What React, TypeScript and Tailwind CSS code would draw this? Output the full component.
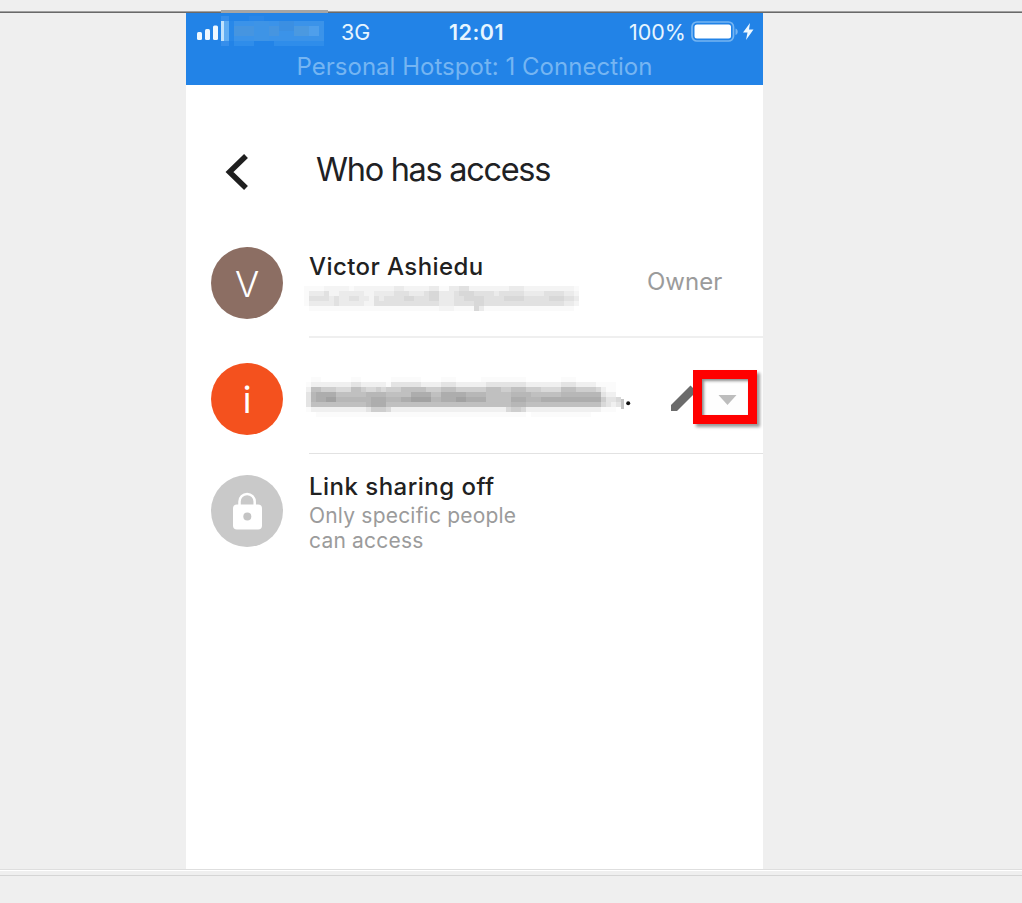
import type { ReactNode } from "react";

const EMAIL_LEVELS = ["", "#fafafa", "#f4f4f4", "#ebebeb", "#e1e1e1", "#d8d8d8"];
const NAME_LEVELS = [
  "",
  "#fbfbfb",
  "#f0f0f0",
  "#e4e4e4",
  "#d9d9d9",
  "#cecece",
  "#c0c0c0",
  "#b7b7b7",
  "#adadad",
  "#a2a2a2",
];

// Each digit is the shade of one mosaic cell
const EMAIL_ROWS = [
  "1111222221222222223322222331133442222222233322222222221",
  "1333422333332233334443334553334555444434444433334444332",
  "1444434334433243444455444553334455554444555544444555443",
  "1333334333332244444444444443334444554444444444444444332",
  "0111111111111111111111111112221111531111111111111111110",
];

const NAME_ROWS = [
  "0011000000110000001111110000111000001111111110000000111000000000",
  "0122222222332222213333332222333222222333333332222222333222211110",
  "0266555444665445455566666555666555555666556665554444666555542110",
  "0378888666666777766666888866888887777666667777666666777777773220",
  "0378899777777788877788999977888998888666668887778888888888885334",
  "0366666666666788866666666666666666666666667776666666666666664323",
  "0122222222222355542222222222222222222222245542222222222222221110",
  "0001111111111111111111111111111111111111111110111111111111000000",
];

interface MosaicProps {
  rows: string[];
  levels: string[];
}

function Mosaic({ rows, levels }: MosaicProps) {
  const width = rows[0].length * 5;
  const height = rows.length * 5;
  return (
    <svg
      width={width}
      height={height}
      viewBox={`0 0 ${width} ${height}`}
      shapeRendering="crispEdges"
      className="block shrink-0"
    >
      {rows.map((row, y) =>
        row.split("").map((cell, x) =>
          cell === "0" ? null : (
            <rect
              key={`${x}-${y}`}
              x={x * 5}
              y={y * 5}
              width={5}
              height={5}
              fill={levels[Number(cell)]}
            />
          )
        )
      )}
    </svg>
  );
}

function SignalIcon() {
  return (
    <svg width="128" height="32" viewBox="0 0 128 32" className="block">
      <g fill="#eef8ff">
        <rect x="1" y="16" width="5" height="8" rx="1.5" />
        <rect x="9" y="13" width="5" height="11" rx="1.5" />
        <rect x="17" y="9.5" width="5" height="14.5" rx="1.5" />
      </g>
      <g shapeRendering="crispEdges">
        <rect x="25" y="0" width="8" height="30" fill="#368eeb" />
        <rect x="38" y="25" width="20" height="5" fill="#2f8dea" />
        <rect x="78" y="25" width="50" height="5" fill="#2f8dea" />
        <rect x="53" y="0" width="15" height="5" fill="#2886e8" />
        <rect x="33" y="5" width="95" height="20" fill="#3b93e9" />
        <rect x="33" y="5" width="5" height="20" fill="#2888e9" />
        <rect x="38" y="10" width="20" height="10" fill="#4695e0" />
        <rect x="58" y="5" width="15" height="20" fill="#3e94e6" />
        <rect x="73" y="10" width="10" height="10" fill="#4695e0" />
        <rect x="83" y="5" width="15" height="10" fill="#3b8fe2" />
        <rect x="98" y="10" width="15" height="10" fill="#4b99e0" />
        <rect x="113" y="10" width="10" height="10" fill="#4f9feb" />
        <rect x="25" y="5" width="3" height="20" fill="#c0e2fc" />
        <rect x="28" y="5" width="5" height="20" fill="#60adf3" />
      </g>
    </svg>
  );
}

function BatteryIcon() {
  return (
    <svg width="64" height="24" viewBox="0 0 64 24" className="block">
      <rect x="1" y="2" width="41.5" height="19" rx="5" fill="none" stroke="#75b5f2" strokeWidth="1.7" />
      <rect x="3.5" y="4.5" width="36.500" height="14" rx="2.5" fill="#fff" />
      <path d="M44.500 8.500c3 1 3 5.500 0 6.500z" fill="#75b5f2" />
      <path d="M59 3 52 12.500h4.500l-1.500 7.500 7.500-10.500h-4.500z" fill="#eef8ff" />
    </svg>
  );
}

function StatusBar() {
  return (
    <div className="h-[72px] bg-[#2283e7] text-[#e6f5ff]">
      <div className="flex h-[38px] items-center pl-[10px] text-[21.5px]">
        <SignalIcon />
        <span className="ml-[17px] w-[108px] whitespace-nowrap">3G</span>
        <span className="w-[180px] whitespace-nowrap font-semibold tracking-[0.5px]">12:01</span>
        <span className="w-[57px] whitespace-nowrap">100%</span>
        <span className="ml-[5px]">
          <BatteryIcon />
        </span>
      </div>
      <div className="pt-[2px] text-center text-[24px] leading-[28px] tracking-[0.02px] text-[#75b5f2]">
        Personal Hotspot: 1 Connection
      </div>
    </div>
  );
}

interface AccessRowProps {
  avatar: ReactNode;
  rowClass: string;
  avatarClass: string;
  bodyClass?: string;
  children: ReactNode;
}

function AccessRow({ avatar, rowClass, avatarClass, bodyClass = "", children }: AccessRowProps) {
  return (
    <div className={`flex pl-[25px] ${rowClass}`}>
      <div
        className={`flex h-[72px] w-[72px] shrink-0 items-center justify-center rounded-full text-[36px] text-white ${avatarClass}`}
      >
        {avatar}
      </div>
      <div className={`ml-[26px] min-w-0 flex-1 ${bodyClass}`}>{children}</div>
    </div>
  );
}

function LockIcon() {
  return (
    <svg width="32" height="40" viewBox="0 0 32 40">
      <path d="M8.500 16v-5.500a7.600 7.600 0 0 1 15.200 0V16" fill="none" stroke="#fff" strokeWidth="2.500" />
      <rect x="2" y="13.500" width="29" height="25" rx="4" fill="#fff" />
      <circle cx="16.300" cy="25.500" r="4" fill="#c4c4c4" />
    </svg>
  );
}

export default function App() {
  return (
    <div className="relative h-[903px] w-[1022px] overflow-hidden bg-[#efefef] font-['Inter',sans-serif]">
      <div className="h-[11px]" />
      <div className="h-px bg-[#a0a0a0]" />
      <div className="h-px bg-[#696969]" />
      <div className="absolute left-[221px] top-[10px] h-[3px] w-[107px] bg-[#a5a5a5]" />

      <main className="ml-[186px] h-[856px] w-[577px] bg-white">
        <StatusBar />

        <header className="flex h-[145px] items-center pl-[38px] pt-[28px]">
          <svg width="26" height="40" viewBox="0 0 26 40" className="block">
            <path d="M22 4 5.500 20 22 36" fill="none" stroke="#1f1f1f" strokeWidth="5.500" />
          </svg>
          <h1 className="mb-[4px] ml-[66px] whitespace-nowrap text-[32.5px] leading-[40px] tracking-[-1.3px] text-[#202124]">
            Who has access
          </h1>
        </header>

        <AccessRow
          avatar={<span className="pt-[2px] font-light">V</span>}
          rowClass="h-[108px]"
          avatarClass="mt-[17px] bg-[#8c6e63]"
          bodyClass="flex border-b-2 border-[#efefef]"
        >
          <div className="w-[338px] pt-[21px]">
            <div className="whitespace-nowrap text-[24px] font-medium leading-[32px] tracking-[0.42px] text-[#212121]">
              Victor Ashiedu
            </div>
            <div className="-ml-[5px] mt-[3px]">
              <Mosaic rows={EMAIL_ROWS} levels={EMAIL_LEVELS} />
            </div>
          </div>
          <div className="pt-[37px] text-[24px] leading-[30px] text-[#9b9b9b]">Owner</div>
        </AccessRow>

        <AccessRow
          avatar={<span className="pt-[2px]">i</span>}
          rowClass="h-[116px]"
          avatarClass="mt-[25px] bg-[#f4511e]"
          bodyClass="border-b border-[#e2e2e2]"
        >
          <div className="relative flex pt-[39px]">
            <div className="-ml-[8px]">
              <Mosaic rows={NAME_ROWS} levels={NAME_LEVELS} />
            </div>
            <svg width="10" height="40" viewBox="0 0 10 40" className="block">
              <rect x="0" y="22" width="3" height="10" fill="#c4c4c4" />
              <circle cx="7.200" cy="26.300" r="2" fill="#111" />
            </svg>
            <svg width="34" height="34" viewBox="0 0 34 34" className="ml-[40px] mt-[3px] block">
              <path d="M0 31v-6L19.500 5.500l6 6L6 31z" fill="#6b6b6b" />
              <path d="M22 3l3-2 8 2v4l-5 3z" fill="#6b6b6b" />
            </svg>
            <div className="absolute left-[384px] top-[32px] flex h-[54px] w-[64px] items-center justify-center border-[9px] border-[#ff0000] shadow-[3px_3px_3px_rgba(0,0,0,0.4)]">
              <div className="flex h-full w-full items-center justify-center bg-[#fefefe] pl-[4px] pt-[5px] shadow-[inset_2px_2px_3px_rgba(0,0,0,0.45)]">
                <svg width="19" height="10" viewBox="0 0 19 10">
                  <path d="M0.500 0h18L9.500 10z" fill="#bdbdbd" />
                </svg>
              </div>
            </div>
          </div>
        </AccessRow>

        <AccessRow avatar={<LockIcon />} rowClass="h-[130px]" avatarClass="mt-[21px] bg-[#c9c9c9]">
          <div className="pt-[17px]">
            <div className="text-[24px] font-medium leading-[32px] tracking-[0.48px] text-[#212121]">
              Link sharing off
            </div>
            <div className="text-[21px] leading-[25px] tracking-[0.2px] text-[#9b9b9b]">
              Only specific people
              <br />
              can access
            </div>
          </div>
        </AccessRow>
      </main>

      <div className="h-px bg-[#dedede]" />
      <div className="h-px bg-white" />
      <div className="mt-[4px] h-px bg-[#d5d5d5]" />
    </div>
  );
}
